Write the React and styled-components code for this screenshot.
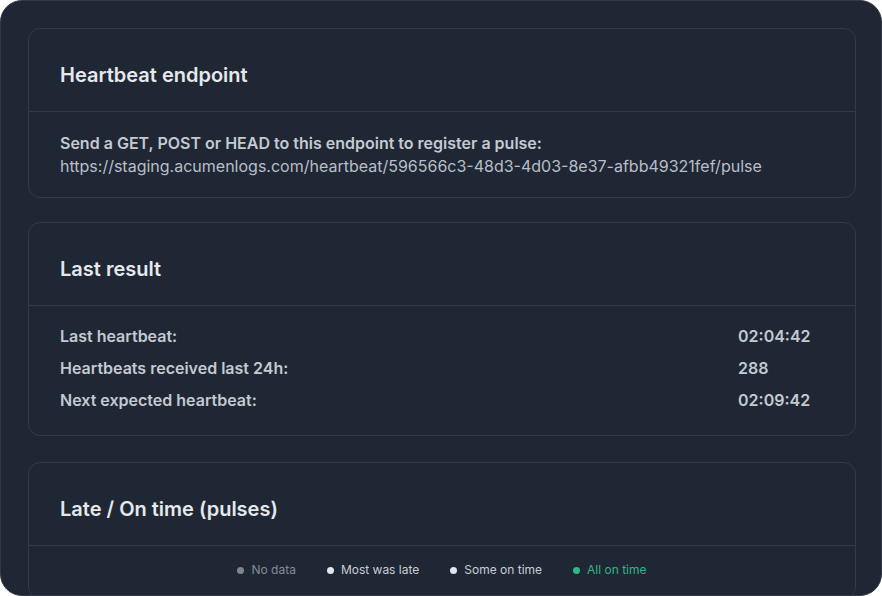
import React from 'react';
import styled, { createGlobalStyle } from 'styled-components';

const GlobalStyle = createGlobalStyle`
  html, body {
    margin: 0;
    padding: 0;
    background: #ffffff;
  }
  body {
    font-family: Inter, "Noto Sans", "Liberation Sans", sans-serif;
    -webkit-font-smoothing: antialiased;
  }
`;

const Frame = styled.div`
  box-sizing: border-box;
  width: 882px;
  height: 596px;
  overflow: hidden;
  background: #1f2735;
  border: 1px solid #323a47;
  border-radius: 22px;
  padding: 27px 25px 0 27px;
  display: flex;
  flex-direction: column;
  gap: 24px;
`;

const Card = styled.section`
  flex-shrink: 0;
  border: 1px solid #343c4a;
  border-radius: 12px;
  background: #1f2735;
  margin-bottom: ${({ $after }) => $after || 0}px;
`;

const CardHeader = styled.header`
  padding: 32px 31px 22px;
  border-bottom: 1px solid #343c4a;
`;

const Title = styled.h2`
  margin: 0;
  font-size: 20px;
  line-height: 28px;
  font-weight: 600;
  color: #e6e8ec;
`;

const CardBody = styled.div`
  padding: ${({ $pad }) => $pad || '20px 31px'};
`;

const Lead = styled.p`
  margin: 0;
  font-size: 16px;
  line-height: 23px;
  font-weight: 600;
  color: #c5c9d0;
`;

const Url = styled.p`
  margin: 0;
  font-size: 16px;
  line-height: 23px;
  font-weight: 400;
  color: #b9bec6;
`;

const Stats = styled.dl`
  margin: 0;
  display: grid;
  grid-template-columns: 1fr 86px;
  row-gap: 8px;
`;

const StatLabel = styled.dt`
  font-size: 16px;
  line-height: 24px;
  font-weight: 600;
  color: #c5c9d0;
`;

const StatValue = styled.dd`
  margin: 0;
  font-size: 16px;
  line-height: 24px;
  font-weight: 600;
  color: #c5c9d0;
`;

const Legend = styled.ul`
  list-style: none;
  margin: 0;
  padding: 0;
  display: flex;
  justify-content: center;
  gap: 31px;
`;

const LegendItem = styled.li`
  display: flex;
  align-items: center;
  gap: 7px;
  font-size: 12px;
  line-height: 16px;
  color: ${({ $color }) => $color};
  &::before {
    content: '';
    width: 7px;
    height: 7px;
    border-radius: 50%;
    background: ${({ $dot }) => $dot};
  }
`;

const stats = [
  { label: 'Last heartbeat:', value: '02:04:42' },
  { label: 'Heartbeats received last 24h:', value: '288' },
  { label: 'Next expected heartbeat:', value: '02:09:42' },
];

const legend = [
  { label: 'No data', color: '#858b95', dot: '#80858d' },
  { label: 'Most was late', color: '#c9cdd3', dot: '#e3e5e8' },
  { label: 'Some on time', color: '#c9cdd3', dot: '#e3e5e8' },
  { label: 'All on time', color: '#32b582', dot: '#2fb883' },
];

export default function App() {
  return (
    <>
      <GlobalStyle />
      <Frame>
        <Card>
          <CardHeader>
            <Title>Heartbeat endpoint</Title>
          </CardHeader>
          <CardBody $pad="20px 31px 19px">
            <Lead>Send a GET, POST or HEAD to this endpoint to register a pulse:</Lead>
            <Url>https://staging.acumenlogs.com/heartbeat/596566c3-48d3-4d03-8e37-afbb49321fef/pulse</Url>
          </CardBody>
        </Card>
        <Card $after={2}>
          <CardHeader>
            <Title>Last result</Title>
          </CardHeader>
          <CardBody $pad="18px 31px 23px">
            <Stats>
              {stats.map((s) => (
                <React.Fragment key={s.label}>
                  <StatLabel>{s.label}</StatLabel>
                  <StatValue>{s.value}</StatValue>
                </React.Fragment>
              ))}
            </Stats>
          </CardBody>
        </Card>
        <Card>
          <CardHeader>
            <Title>Late / On time (pulses)</Title>
          </CardHeader>
          <CardBody $pad="16px 31px 20px">
            <Legend>
              {legend.map((l) => (
                <LegendItem key={l.label} $color={l.color} $dot={l.dot}>
                  {l.label}
                </LegendItem>
              ))}
            </Legend>
          </CardBody>
        </Card>
      </Frame>
    </>
  );
}
